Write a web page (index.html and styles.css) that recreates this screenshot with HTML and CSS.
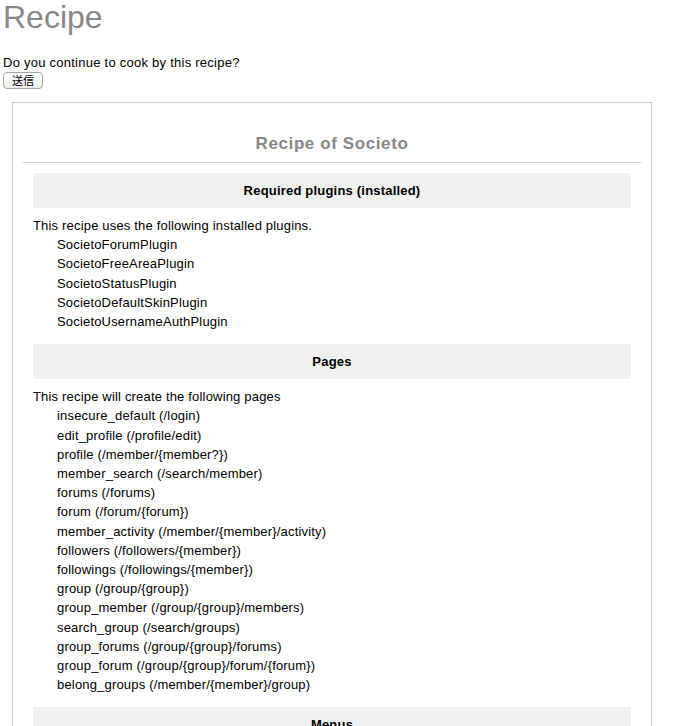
FILE: index.html
```html
<!DOCTYPE html>
<html lang="ja">
<head>
<meta charset="utf-8">
<title>Recipe</title>
<link rel="stylesheet" href="styles.css">
</head>
<body>
<h1 class="page-title">Recipe</h1>
<form class="confirm">
  <p class="confirm-text">Do you continue to cook by this recipe?</p>
  <button type="button" class="submit">送信</button>
</form>
<div class="recipe">
  <h2 class="recipe-title">Recipe of Societo</h2>
  <section class="sec">
    <h3 class="sec-head">Required plugins (installed)</h3>
    <p class="sec-desc">This recipe uses the following installed plugins.</p>
    <ul class="sec-list">
      <li>SocietoForumPlugin</li>
      <li>SocietoFreeAreaPlugin</li>
      <li>SocietoStatusPlugin</li>
      <li>SocietoDefaultSkinPlugin</li>
      <li>SocietoUsernameAuthPlugin</li>
    </ul>
  </section>
  <section class="sec">
    <h3 class="sec-head">Pages</h3>
    <p class="sec-desc">This recipe will create the following pages</p>
    <ul class="sec-list">
      <li>insecure_default (/login)</li>
      <li>edit_profile (/profile/edit)</li>
      <li>profile (/member/{member?})</li>
      <li>member_search (/search/member)</li>
      <li>forums (/forums)</li>
      <li>forum (/forum/{forum})</li>
      <li>member_activity (/member/{member}/activity)</li>
      <li>followers (/followers/{member})</li>
      <li>followings (/followings/{member})</li>
      <li>group (/group/{group})</li>
      <li>group_member (/group/{group}/members)</li>
      <li>search_group (/search/groups)</li>
      <li>group_forums (/group/{group}/forums)</li>
      <li>group_forum (/group/{group}/forum/{forum})</li>
      <li>belong_groups (/member/{member}/group)</li>
    </ul>
  </section>
  <section class="sec">
    <h3 class="sec-head">Menus</h3>
    <p class="sec-desc">This recipe will create the following menus</p>
  </section>
</div>
</body>
</html>
```
FILE: styles.css
```css
html, body {
  margin: 0;
  padding: 0;
  background: #fff;
}
body {
  padding: 0 3px;
  font-family: "Liberation Sans", Arial, "Noto Sans CJK JP", sans-serif;
  font-size: 13px;
  letter-spacing: 0.18px;
  color: #000;
}
.page-title {
  margin: 0;
  font-size: 32px;
  line-height: 34px;
  font-weight: normal;
  letter-spacing: 0;
  color: #888;
}
.confirm {
  margin: 0;
}
.confirm-text {
  margin: 20px 0 0;
  line-height: 17px;
  letter-spacing: 0.25px;
}
.submit {
  display: block;
  margin: 1px 0 0;
  width: 40px;
  height: 17px;
  padding: 0;
  font-family: "Noto Sans CJK JP", sans-serif;
  font-size: 11px;
  line-height: 15px;
  letter-spacing: 0;
  color: #000;
  background: linear-gradient(#fff, #ececec);
  border: 1px solid #a6a6a6;
  border-radius: 4px;
}
.recipe {
  width: 618px;
  margin: 13px 0 0 9px;
  padding: 31px 10px 40px;
  border: 1px solid #ccc;
}
.recipe-title {
  margin: 0;
  padding-bottom: 8px;
  border-bottom: 1px solid #ccc;
  text-align: center;
  font-size: 17px;
  line-height: 20px;
  font-weight: bold;
  letter-spacing: 0.6px;
  color: #888;
}
.sec {
  margin: 13px 10px 0;
}
.recipe-title + .sec {
  margin-top: 10px;
}
.sec-head {
  margin: 0;
  background: #f0f0f0;
  text-align: center;
  font-size: 13px;
  line-height: 35px;
  font-weight: bold;
  letter-spacing: 0.2px;
}
.sec-desc {
  margin: 8px 0 0;
  line-height: 19.2px;
}
.sec-list {
  margin: 0;
  padding: 0 0 0 24px;
  list-style: none;
  line-height: 19.2px;
}
```
